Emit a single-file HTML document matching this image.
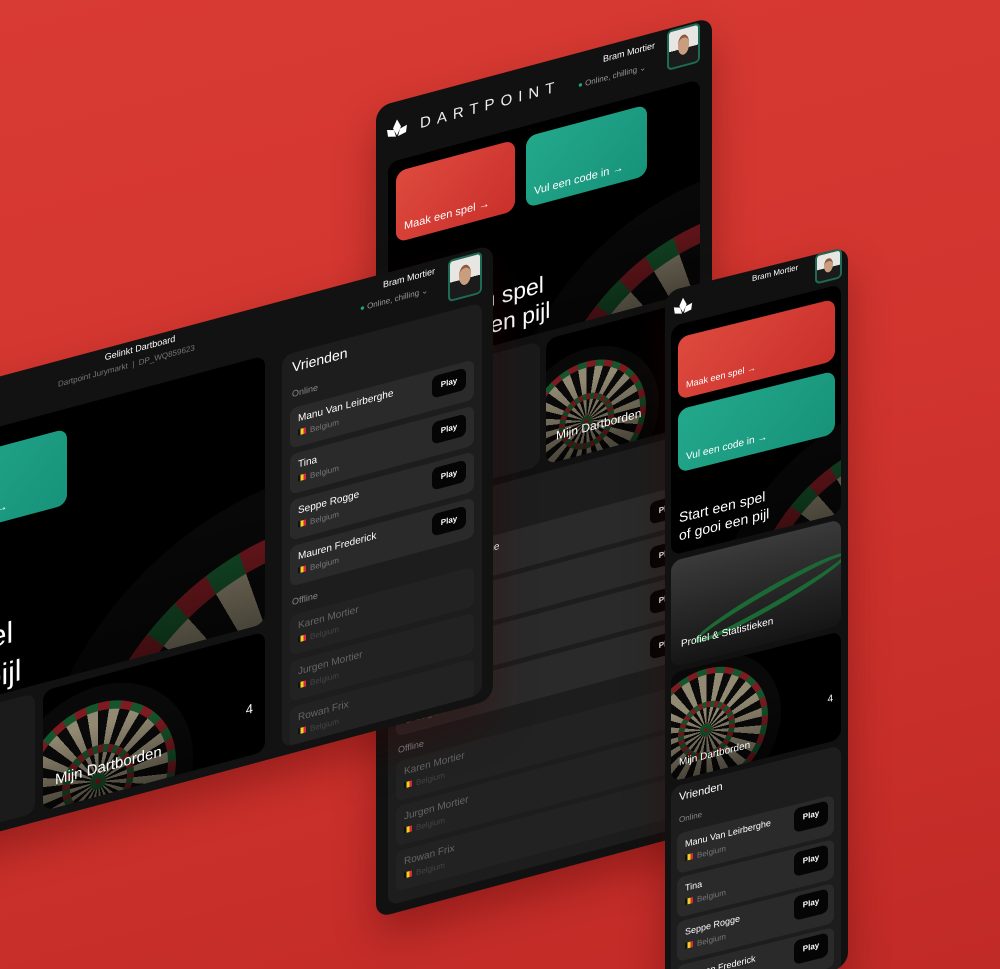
<!DOCTYPE html>
<html style="width:1000px;height:969px;overflow:hidden"><head><meta charset="utf-8">
<style>
*{margin:0;padding:0;box-sizing:border-box}
body{width:1000px;height:969px;overflow:hidden;position:relative;background:linear-gradient(165deg,#d83b33 0%,#d1342e 50%,#c02a27 100%);font-family:"Liberation Sans",sans-serif;color:#fff}
.p{position:absolute;transform-origin:0 0;background:#121212;border-radius:14px;overflow:hidden;box-shadow:0 20px 40px rgba(60,0,0,.35)}
.a{position:absolute}
.card{position:absolute;border-radius:10px;overflow:hidden}
.hero{background:#000}
.btnr{background:linear-gradient(135deg,#de4a3e,#c9302b)}
.btng{background:linear-gradient(135deg,#23a88c,#17937a)}
.bt{position:absolute;left:8px;bottom:8px;font-size:11px;white-space:nowrap}
.fr{background:#1d1d1d}
.row{position:absolute;background:#2a2a2a;border-radius:7px}
.row.off{background:#222}
.nm{position:absolute;left:8px;top:7px;font-size:10px;white-space:nowrap}
.ct{position:absolute;left:8px;top:22px;font-size:8px;color:#777;white-space:nowrap}
.ct b{display:inline-block;width:8px;height:6px;margin-right:4px;background:linear-gradient(90deg,#111 33%,#f2d21b 33% 66%,#d8283a 66%)}
.off .nm{color:#666}.off .ct{color:#444}
.play{position:absolute;background:#050505;border-radius:6px;font-size:8px;font-weight:bold;text-align:center;width:34px;height:22px;line-height:22px}
.lbl{position:absolute;font-size:9px;color:#888}
.db{position:absolute;border-radius:50%;background:#0b0b0b;filter:brightness(.8)}
.db i{position:absolute;border-radius:50%}
.db i:nth-child(1){inset:9%;background:repeating-conic-gradient(#9e2229 0 9deg,#1b6a36 9deg 18deg)}
.db i:nth-child(2){inset:13%;background:repeating-conic-gradient(#0d0d0d 0 9deg,#b7ab8f 9deg 18deg)}
.db i:nth-child(3){inset:31%;background:repeating-conic-gradient(#9e2229 0 9deg,#1b6a36 9deg 18deg)}
.db i:nth-child(4){inset:35%;background:repeating-conic-gradient(#0d0d0d 0 9deg,#b7ab8f 9deg 18deg)}
.db i:nth-child(5){inset:46%;background:#1b6a36}
.db i:nth-child(6){inset:48.5%;background:#9e2229}
.av{position:absolute;border:2px solid #1d6a55;border-radius:5px;background:linear-gradient(#e8e6e3 55%,#1b1b1b 55%);overflow:hidden}
.av:after{content:"";position:absolute;left:30%;top:18%;width:40%;height:45%;border-radius:50%;background:#c99e7e;border-top:3px solid #8a5a3a}
.logo{position:absolute}
.shade{position:absolute;inset:0;background:linear-gradient(180deg,rgba(0,0,0,0) 40%,rgba(0,0,0,.5))}
</style></head><body>

<!-- CENTER PANEL -->
<div class="p" style="left:376px;top:107px;width:336px;height:811px;transform:skewY(-15deg);z-index:1;background:#111">
  <svg class="logo" style="left:9px;top:18px" width="24" height="18" viewBox="0 0 24 18"><path d="M12 0 L16 8 L12 16 L8 8Z M2 8 L9 10 L11 17 L3 15Z M22 8 L15 10 L13 17 L21 15Z" fill="#fff"/></svg>
  <div class="a" style="left:44px;top:20px;font-size:15px;letter-spacing:6px;color:#eee">DARTPOINT</div>
  <div class="a" style="left:227px;top:8px;font-size:9px">Bram Mortier</div>
  <div class="a" style="left:202px;top:28px;font-size:8px;color:#999"><span style="color:#1fa187">●</span> Online, chilling ⌄</div>
  <div class="av" style="left:291px;top:2px;width:33px;height:40px"></div>
  <div class="card hero" style="left:12px;top:59px;width:312px;height:211px">
    <div class="db" style="left:110px;top:100px;width:470px;height:470px"><i></i><i></i><i></i><i></i><i></i><i></i></div>
    <div class="shade"></div>
    <div class="card btnr" style="left:8px;top:11px;width:119px;height:71px"><div class="bt">Maak een spel →</div></div>
    <div class="card btng" style="left:138px;top:11px;width:121px;height:71px"><div class="bt">Vul een code in →</div></div>
    <div class="a" style="left:14px;top:150px;font-size:23px;line-height:27px">Start een spel<br>of gooi een pijl</div>
  </div>
  <div class="card hero" style="left:12px;top:278px;width:152px;height:125px;background:#1a1a1a"></div>
  <div class="card hero" style="left:170px;top:278px;width:154px;height:125px">
    <div class="db" style="left:-32px;top:20px;width:145px;height:145px"><i></i><i></i><i></i><i></i><i></i><i></i></div>
    <div class="shade"></div>
    <div class="a" style="left:10px;top:92px;font-size:12px">Mijn Dartborden</div>
  </div>
  <div class="card fr" style="left:12px;top:410px;width:312px;height:392px">
    <div class="a" style="left:10px;top:10px;font-size:14px">Vrienden</div>
    <div class="lbl" style="left:10px;top:36px">Online</div>
    <div class="row" style="left:8px;top:50px;width:296px;height:40px"><div class="nm">Manu Van Leirberghe</div><div class="ct"><b></b>Belgium</div><div class="play" style="right:8px;top:9px">Play</div></div>
    <div class="row" style="left:8px;top:95px;width:296px;height:40px"><div class="nm">Tina</div><div class="ct"><b></b>Belgium</div><div class="play" style="right:8px;top:9px">Play</div></div>
    <div class="row" style="left:8px;top:140px;width:296px;height:40px"><div class="nm">Seppe Rogge</div><div class="ct"><b></b>Belgium</div><div class="play" style="right:8px;top:9px">Play</div></div>
    <div class="row" style="left:8px;top:185px;width:296px;height:40px"><div class="nm">Mauren Frederick</div><div class="ct"><b></b>Belgium</div><div class="play" style="right:8px;top:9px">Play</div></div>
    <div class="lbl" style="left:10px;top:234px">Offline</div>
    <div class="row off" style="left:8px;top:250px;width:296px;height:40px"><div class="nm">Karen Mortier</div><div class="ct"><b></b>Belgium</div></div>
    <div class="row off" style="left:8px;top:295px;width:296px;height:40px"><div class="nm">Jurgen Mortier</div><div class="ct"><b></b>Belgium</div></div>
    <div class="row off" style="left:8px;top:340px;width:296px;height:40px"><div class="nm">Rowan Frix</div><div class="ct"><b></b>Belgium</div></div>
  </div>
</div>

<!-- LEFT PANEL -->
<div class="p" style="left:-200px;top:430px;width:693px;height:455px;transform:skewY(-15deg);z-index:2;background:#121212">
  <div class="a" style="left:290px;top:4px;width:100px;text-align:center;font-size:9px">Gelinkt Dartboard</div>
  <div class="a" style="left:258px;top:19px;font-size:8px;color:#777;white-space:nowrap">Dartpoint Jurymarkt &nbsp;|&nbsp; DP_WQ859623</div>
  <div class="a" style="left:583px;top:6px;font-size:9px">Bram Mortier</div>
  <div class="a" style="left:560px;top:24px;font-size:8px;color:#999"><span style="color:#1fa187">●</span> Online, chilling ⌄</div>
  <div class="av" style="left:648px;top:4px;width:34px;height:42px"></div>
  <div class="card hero" style="left:0;top:50px;width:465px;height:268px">
    <div class="db" style="left:230px;top:130px;width:560px;height:560px"><i></i><i></i><i></i><i></i><i></i><i></i></div>
    <div class="shade"></div>
    <div class="card btng" style="left:110px;top:20px;width:157px;height:76px"><div class="bt">Vul een code in →</div></div>
    <div class="a" style="left:28px;top:190px;font-size:30px;line-height:40px">Start een spel<br>of gooi een pijl</div>
  </div>
  <div class="card hero" style="left:0;top:326px;width:235px;height:120px;background:#1b1b1b"></div>
  <div class="card hero" style="left:243px;top:326px;width:222px;height:120px">
    <div class="db" style="left:-40px;top:10px;width:190px;height:190px"><i></i><i></i><i></i><i></i><i></i><i></i></div>
    <div class="shade"></div>
    <div class="a" style="left:12px;top:84px;font-size:15px">Mijn Dartborden</div>
    <div class="a" style="right:12px;top:66px;font-size:13px">4</div>
  </div>
  <div class="card fr" style="left:482px;top:55px;width:200px;height:392px">
    <div class="a" style="left:10px;top:6px;font-size:14px">Vrienden</div>
    <div class="lbl" style="left:10px;top:36px">Online</div>
    <div class="row" style="left:8px;top:55px;width:184px;height:40px"><div class="nm">Manu Van Leirberghe</div><div class="ct"><b></b>Belgium</div><div class="play" style="right:8px;top:6px">Play</div></div>
    <div class="row" style="left:8px;top:101px;width:184px;height:40px"><div class="nm">Tina</div><div class="ct"><b></b>Belgium</div><div class="play" style="right:8px;top:6px">Play</div></div>
    <div class="row" style="left:8px;top:147px;width:184px;height:40px"><div class="nm">Seppe Rogge</div><div class="ct"><b></b>Belgium</div><div class="play" style="right:8px;top:6px">Play</div></div>
    <div class="row" style="left:8px;top:193px;width:184px;height:40px"><div class="nm">Mauren Frederick</div><div class="ct"><b></b>Belgium</div><div class="play" style="right:8px;top:6px">Play</div></div>
    <div class="lbl" style="left:10px;top:244px">Offline</div>
    <div class="row off" style="left:8px;top:262px;width:184px;height:40px"><div class="nm">Karen Mortier</div><div class="ct"><b></b>Belgium</div></div>
    <div class="row off" style="left:8px;top:308px;width:184px;height:40px"><div class="nm">Jurgen Mortier</div><div class="ct"><b></b>Belgium</div></div>
    <div class="row off" style="left:8px;top:354px;width:184px;height:40px"><div class="nm">Rowan Frix</div><div class="ct"><b></b>Belgium</div></div>
  </div>
</div>

<!-- RIGHT PANEL -->
<div class="p" style="left:665px;top:292px;width:183px;height:720px;transform:skewY(-14deg);z-index:3;background:#111">
  <svg class="logo" style="left:7px;top:10px" width="22" height="17" viewBox="0 0 24 18"><path d="M12 0 L16 8 L12 16 L8 8Z M2 8 L9 10 L11 17 L3 15Z M22 8 L15 10 L13 17 L21 15Z" fill="#fff"/></svg>
  <div class="a" style="left:87px;top:4px;font-size:8px">Bram Mortier</div>
  <div class="av" style="left:150px;top:0;width:27px;height:30px"></div>
  <div class="card hero" style="left:6px;top:36px;width:170px;height:229px">
    <div class="db" style="left:40px;top:130px;width:380px;height:380px"><i></i><i></i><i></i><i></i><i></i><i></i></div>
    <div class="shade"></div>
    <div class="card btnr" style="left:7px;top:13px;width:157px;height:62px"><div class="bt" style="font-size:9px">Maak een spel →</div></div>
    <div class="card btng" style="left:7px;top:85px;width:157px;height:63px"><div class="bt" style="font-size:10px">Vul een code in →</div></div>
    <div class="a" style="left:8px;top:184px;font-size:14px;line-height:18px">Start een spel<br>of gooi een pijl</div>
  </div>
  <div class="card hero" style="left:6px;top:271px;width:170px;height:106px;background:linear-gradient(180deg,#3a3a3a,#151515)">
    <div class="a" style="left:20px;top:50px;width:160px;height:22px;border-radius:50%;border:5px solid #1b6a36;transform:rotate(-18deg)"></div>
    <div class="a" style="left:10px;top:80px;font-size:10px">Profiel &amp; Statistieken</div>
  </div>
  <div class="card hero" style="left:6px;top:383px;width:170px;height:108px">
    <div class="db" style="left:-40px;top:-10px;width:150px;height:150px"><i></i><i></i><i></i><i></i><i></i><i></i></div>
    <div class="shade"></div>
    <div class="a" style="left:8px;top:86px;font-size:10px">Mijn Dartborden</div>
    <div class="a" style="right:8px;top:60px;font-size:10px">4</div>
  </div>
  <div class="card fr" style="left:6px;top:497px;width:170px;height:260px">
    <div class="a" style="left:8px;top:6px;font-size:11px">Vrienden</div>
    <div class="lbl" style="left:8px;top:30px;font-size:8px">Online</div>
    <div class="row" style="left:6px;top:48px;width:157px;height:40px"><div class="nm" style="font-size:9px">Manu Van Leirberghe</div><div class="ct"><b></b>Belgium</div><div class="play" style="right:6px;top:4px;height:24px">Play</div></div>
    <div class="row" style="left:6px;top:92px;width:157px;height:40px"><div class="nm" style="font-size:9px">Tina</div><div class="ct"><b></b>Belgium</div><div class="play" style="right:6px;top:4px;height:24px">Play</div></div>
    <div class="row" style="left:6px;top:136px;width:157px;height:40px"><div class="nm" style="font-size:9px">Seppe Rogge</div><div class="ct"><b></b>Belgium</div><div class="play" style="right:6px;top:4px;height:24px">Play</div></div>
    <div class="row" style="left:6px;top:180px;width:157px;height:40px"><div class="nm" style="font-size:9px">Mauren Frederick</div><div class="ct"><b></b>Belgium</div><div class="play" style="right:6px;top:4px;height:24px">Play</div></div>
  </div>
</div>
</body></html>
